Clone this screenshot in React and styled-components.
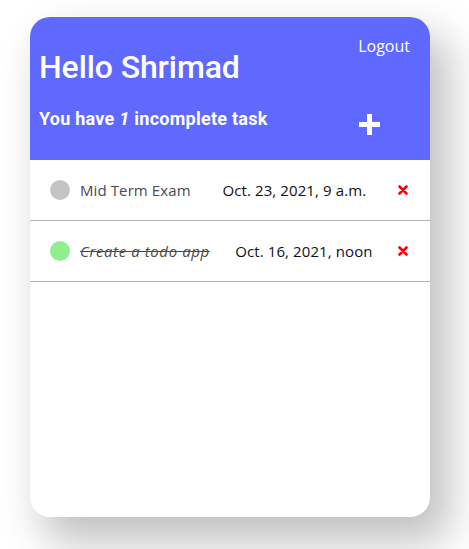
import React, { useState } from "react";
import styled, { createGlobalStyle } from "styled-components";

const GlobalStyle = createGlobalStyle`
	body {
		margin: 0;
		background: #fff;
		font-family: "Open Sans", "DejaVu Sans", sans-serif;
	}
`;

const Page = styled.div`
	padding: 17px 30px 32px;
`;

const Card = styled.div`
	width: 400px;
	height: 500px;
	border-radius: 20px;
	background: #fff;
	overflow: hidden;
	box-shadow: 16px 22px 40px 4px rgba(0, 0, 0, 0.24);
`;

const Header = styled.header`
	background: #5f69ff;
	color: #fff;
	height: 143px;
	box-sizing: border-box;
	padding: 19px 20px 0 9px;
	display: flex;
	flex-direction: column;
`;

const TopRow = styled.div`
	display: flex;
	justify-content: space-between;
	align-items: flex-start;
`;

const Title = styled.h1`
	margin: 12px 0 0;
	font-family: Roboto, "Liberation Sans", sans-serif;
	font-weight: 500;
	font-size: 32px;
	line-height: 38px;
	letter-spacing: -0.1px;
`;

const Logout = styled.button`
	border: none;
	background: none;
	color: #fff;
	padding: 0;
	font-family: "Open Sans", "DejaVu Sans", sans-serif;
	font-size: 16px;
	line-height: 20px;
	cursor: pointer;
`;

const BottomRow = styled.div`
	margin-top: 22px;
	display: flex;
	justify-content: space-between;
	align-items: flex-start;
`;

const Subtitle = styled.p`
	margin: 0;
	font-family: Roboto, "Liberation Sans", sans-serif;
	font-weight: 700;
	font-size: 18px;
	line-height: 22px;
	letter-spacing: 0.25px;

	em {
		font-style: italic;
	}
`;

const AddButton = styled.button`
	border: none;
	background: none;
	padding: 0;
	margin: 6px 30px 0 0;
	width: 21px;
	height: 21px;
	cursor: pointer;
	display: flex;
`;

const TaskList = styled.ul`
	list-style: none;
	margin: 0;
	padding: 0;
`;

const TaskRow = styled.li`
	height: 60px;
	display: flex;
	align-items: center;
	justify-content: space-between;
	padding: 0 22px 0 20px;
	border-bottom: 1px solid #b3b3b3;
`;

const TaskLeft = styled.div`
	display: flex;
	align-items: center;
	gap: 10px;
`;

const Dot = styled.span`
	width: 20px;
	height: 20px;
	border-radius: 50%;
	background: ${(p) => (p.done ? "#90ee90" : "#c4c4c4")};
`;

const TaskName = styled.span`
	font-size: 15px;
	color: #4a4a4a;
	font-style: ${(p) => (p.done ? "italic" : "normal")};
	letter-spacing: ${(p) => (p.done ? "0.6px" : "0.1px")};
	text-decoration: ${(p) => (p.done ? "line-through" : "none")};
`;

const DueDate = styled.span`
	font-size: 15px;
	color: #111;
	letter-spacing: 0.1px;
`;

const Remove = styled.button`
	border: none;
	background: none;
	padding: 0;
	width: 10px;
	height: 10px;
	display: flex;
	cursor: pointer;
`;

const tasks = [
	{ id: 1, name: "Mid Term Exam", due: "Oct. 23, 2021, 9 a.m.", done: false },
	{ id: 2, name: "Create a todo app", due: "Oct. 16, 2021, noon", done: true },
];

export default function App() {
	const [items, setItems] = useState(tasks);
	const left = items.filter((t) => !t.done).length;

	return (
		<>
			<GlobalStyle />
			<Page>
				<Card>
					<Header>
						<TopRow>
							<Title>Hello Shrimad</Title>
							<Logout>Logout</Logout>
						</TopRow>
						<BottomRow>
							<Subtitle>
								You have <em>{left}</em> incomplete task
							</Subtitle>
							<AddButton aria-label="add">
								<svg width="21" height="21" viewBox="0 0 21 21">
									<rect x="8" y="0" width="5" height="21" fill="#fff" />
									<rect x="0" y="8" width="21" height="5" fill="#fff" />
								</svg>
							</AddButton>
						</BottomRow>
					</Header>
					<TaskList>
						{items.map((t) => (
							<TaskRow key={t.id}>
								<TaskLeft>
									<Dot done={t.done} />
									<TaskName done={t.done}>{t.name}</TaskName>
								</TaskLeft>
								<DueDate>{t.due}</DueDate>
								<Remove
									aria-label="remove"
									onClick={() => setItems(items.filter((i) => i.id !== t.id))}
								>
									<svg width="10" height="10" viewBox="0 0 10 10">
										<path
											d="M1.5 1.5 L8.5 8.5 M8.5 1.5 L1.5 8.5"
											stroke="#ff0000"
											strokeWidth="2.6"
											strokeLinecap="round"
										/>
									</svg>
								</Remove>
							</TaskRow>
						))}
					</TaskList>
				</Card>
			</Page>
		</>
	);
}
